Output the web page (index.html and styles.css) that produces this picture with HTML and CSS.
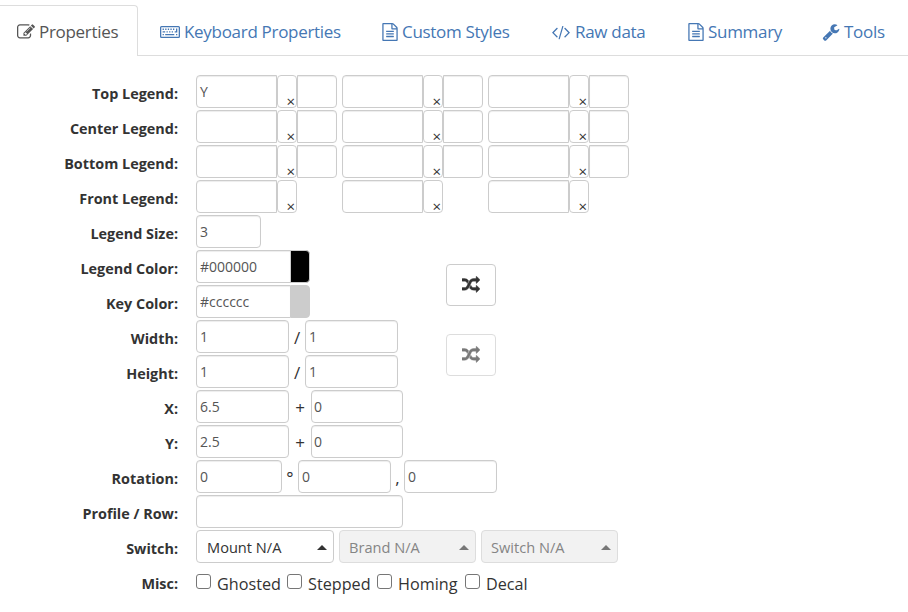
FILE: index.html
```html
<!DOCTYPE html>
<html lang="en">
<head>
<meta charset="utf-8">
<title>Key Properties</title>
<link rel="stylesheet" href="styles.css">
</head>
<body>
<svg class="defs" width="0" height="0">
  <symbol id="i-edit" viewBox="0 0 1792 1792"><path d="M888 1184l116-116-152-152-116 116v56h96v96h56zm440-720q-16-16-33 1l-350 350q-17 17-1 33t33-1l350-350q17-17 1-33zm80 594v190q0 119-84.5 203.500t-203.500 84.500h-832q-119 0-203.500-84.500t-84.500-203.500v-832q0-119 84.500-203.500t203.500-84.500h832q63 0 117 25 15 7 18 23 3 17-9 29l-49 49q-14 14-32 8-23-6-45-6h-832q-66 0-113 47t-47 113v832q0 66 47 113t113 47h832q66 0 113-47t47-113v-126q0-13 9-22l64-64q15-15 35-7t20 29zm-96-738l288 288-672 672h-288v-288zm444 132l-92 92-288-288 92-92q28-28 68-28t68 28l152 152q28 28 28 68t-28 68z"/></symbol>
  <symbol id="i-keyboard" viewBox="0 0 20 12"><path fill-rule="evenodd" d="M1.500 0h17A1.500 1.500 0 0 1 20 1.500v9a1.500 1.500 0 0 1-1.500 1.500h-17A1.500 1.500 0 0 1 0 10.500v-9A1.500 1.500 0 0 1 1.500 0zM1.300 1.300v9.400h17.400V1.300z"/><path d="M2.600 2.600h1.300v1.300H2.600zM5.200 2.600h1.300v1.300H5.200zM7.800 2.600h1.300v1.300H7.800zM10.400 2.600h1.300v1.300h-1.300zM13 2.600h1.300v1.300H13zM16 2.600h1.300v3.900h-2.600V5.200H16zM2.600 5.200h2.600v1.300H2.600zM6.500 5.200h1.300v1.300H6.500zM9.100 5.200h1.300v1.300H9.100zM11.700 5.200H13v1.300h-1.300zM2.600 7.900h1.300v1.300H2.600zM5.200 7.900h9.100v1.300H5.200zM16 7.900h1.300v1.300H16z"/></symbol>
  <symbol id="i-file" viewBox="0 0 1792 1792"><path d="M1596 380q28 28 48 76t20 88v1152q0 40-28 68t-68 28h-1344q-40 0-68-28t-28-68v-1600q0-40 28-68t68-28h896q40 0 88 20t76 48zm-444-244v376h376q-10-29-22-41l-313-313q-12-12-41-22zm384 1528v-1024h-416q-40 0-68-28t-28-68v-416h-768v1536h1280zm-1024-864q0-14 9-23t23-9h704q14 0 23 9t9 23v64q0 14-9 23t-23 9h-704q-14 0-23-9t-9-23v-64zm736 224q14 0 23 9t9 23v64q0 14-9 23t-23 9h-704q-14 0-23-9t-9-23v-64q0-14 9-23t23-9h704zm0 256q14 0 23 9t9 23v64q0 14-9 23t-23 9h-704q-14 0-23-9t-9-23v-64q0-14 9-23t23-9h704z"/></symbol>
  <symbol id="i-code" viewBox="0 0 2048 1792"><path d="M681 1399l-50 50q-10 10-23 10t-23-10l-466-466q-10-10-10-23t10-23l466-466q10-10 23-10t23 10l50 50q10 10 10 23t-10 23l-393 393 393 393q10 10 10 23t-10 23zm591-1067l-373 1291q-4 13-15.500 19.500t-23.500 2.500l-62-17q-13-4-19.500-15.500t-2.500-24.500l373-1291q4-13 15.500-19.500t23.500-2.500l62 17q13 4 19.500 15.500t2.500 24.500zm657 651l-466 466q-10 10-23 10t-23-10l-50-50q-10-10-10-23t10-23l393-393-393-393q-10-10-10-23t10-23l50-50q10-10 23-10t23 10l466 466q10 10 10 23t-10 23z"/></symbol>
  <symbol id="i-wrench" viewBox="0 0 1792 1792"><path d="M448 1472q0-26-19-45t-45-19-45 19-19 45 19 45 45 19 45-19 19-45zm644-420l-682 682q-37 37-90 37-52 0-91-37l-106-108q-38-36-38-90 0-53 38-91l681-681q39 98 114.500 173.500t173.500 114.500zm634-435q0 39-23 106-47 134-164.500 217.500t-258.500 83.500q-185 0-316.500-131.500t-131.500-316.500 131.500-316.500 316.500-131.500q58 0 121.500 16.500t107.500 46.500q16 11 16 28t-16 28l-293 169v224l193 107q5-3 79-48.500t135.500-81 70.500-35.500q15 0 23.500 10t8.500 25z"/></symbol>
  <symbol id="i-random" viewBox="0 0 1792 1792"><path d="M666 481q-60 92-137 273-22-45-37-72.500t-40.500-63.500-51-56.500-63-35-81.500-14.500h-224q-14 0-23-9t-9-23v-192q0-14 9-23t23-9h224q250 0 410 225zm1126 799q0 14-9 23l-320 320q-9 9-23 9-13 0-22.500-9.500t-9.500-22.500v-192q-32 0-85 .5t-81 1-73-1-71-5-64-10.500-63-18.500-58-28.500-59-40-55-53.500-56-69.500q59-93 136-273 22 45 37 72.500t40.500 63.500 51 56.500 63 35 81.500 14.500h256v-192q0-14 9-23t23-9q12 0 24 10l319 319q9 9 9 23zm0-896q0 14-9 23l-320 320q-9 9-23 9-13 0-22.500-9.500t-9.500-22.500v-192h-256q-48 0-87 15t-69 45-51 61.500-45 77.500q-32 62-78 171-29 66-49.500 111t-54 105-64 100-74 83-90 68.500-106.500 42-128 16.500h-224q-14 0-23-9t-9-23v-192q0-14 9-23t23-9h224q48 0 87-15t69-45 51-61.500 45-77.500q32-62 78-171 29-66 49.500-111t54-105 64-100 74-83 90-68.500 106.500-42 128-16.500h256v-192q0-14 9-23t23-9q12 0 24 10l319 319q9 9 9 23z"/></symbol>
</svg>

<nav class="tabs">
  <a class="tab tab-properties active"><svg class="icon"><use href="#i-edit"/></svg><span>Properties</span></a>
  <a class="tab tab-keyboard"><svg class="icon icon-keyboard"><use href="#i-keyboard"/></svg><span>Keyboard Properties</span></a>
  <a class="tab tab-styles"><svg class="icon"><use href="#i-file"/></svg><span>Custom Styles</span></a>
  <a class="tab tab-raw"><svg class="icon icon-code"><use href="#i-code"/></svg><span>Raw data</span></a>
  <a class="tab tab-summary"><svg class="icon"><use href="#i-file"/></svg><span>Summary</span></a>
  <a class="tab tab-tools"><svg class="icon"><use href="#i-wrench"/></svg><span>Tools</span></a>
</nav>

<form class="form">
  <div class="row"><label>Top Legend:</label>
    <div class="legends">
      <div class="legend"><div class="input text">Y</div><div class="swatch">×</div><div class="input size"></div></div>
      <div class="legend"><div class="input text"></div><div class="swatch">×</div><div class="input size"></div></div>
      <div class="legend"><div class="input text"></div><div class="swatch">×</div><div class="input size"></div></div>
    </div></div>
  <div class="row"><label>Center Legend:</label>
    <div class="legends">
      <div class="legend"><div class="input text"></div><div class="swatch">×</div><div class="input size"></div></div>
      <div class="legend"><div class="input text"></div><div class="swatch">×</div><div class="input size"></div></div>
      <div class="legend"><div class="input text"></div><div class="swatch">×</div><div class="input size"></div></div>
    </div></div>
  <div class="row"><label>Bottom Legend:</label>
    <div class="legends">
      <div class="legend"><div class="input text"></div><div class="swatch">×</div><div class="input size"></div></div>
      <div class="legend"><div class="input text"></div><div class="swatch">×</div><div class="input size"></div></div>
      <div class="legend"><div class="input text"></div><div class="swatch">×</div><div class="input size"></div></div>
    </div></div>
  <div class="row"><label>Front Legend:</label>
    <div class="legends">
      <div class="legend"><div class="input text"></div><div class="swatch">×</div></div>
      <div class="legend"><div class="input text"></div><div class="swatch">×</div></div>
      <div class="legend"><div class="input text"></div><div class="swatch">×</div></div>
    </div></div>
  <div class="row"><label>Legend Size:</label><div class="input w65">3</div></div>
  <div class="pair">
    <div class="rows">
      <div class="row"><label>Legend Color:</label><div class="input color">#000000</div><div class="chip black"></div></div>
      <div class="row"><label>Key Color:</label><div class="input color">#cccccc</div><div class="chip gray"></div></div>
    </div>
    <div class="swap"><svg><use href="#i-random"/></svg></div>
  </div>
  <div class="pair">
    <div class="rows">
      <div class="row"><label>Width:</label><div class="input w93">1</div><span class="op slash">/</span><div class="input w93">1</div></div>
      <div class="row"><label>Height:</label><div class="input w93">1</div><span class="op slash">/</span><div class="input w93">1</div></div>
    </div>
    <div class="swap disabled"><svg><use href="#i-random"/></svg></div>
  </div>
  <div class="row"><label>X:</label><div class="input w93">6.5</div><span class="op plus">+</span><div class="input w92">0</div></div>
  <div class="row"><label>Y:</label><div class="input w93">2.5</div><span class="op plus">+</span><div class="input w92">0</div></div>
  <div class="row"><label>Rotation:</label><div class="input w86">0</div><span class="op degree">°</span><div class="input w93">0</div><span class="op comma">,</span><div class="input w93">0</div></div>
  <div class="row"><label>Profile / Row:</label><div class="input w207"></div></div>
  <div class="row"><label>Switch:</label>
    <div class="selects">
      <div class="select mount"><span>Mount N/A</span><i></i></div>
      <div class="select disabled"><span>Brand N/A</span><i></i></div>
      <div class="select disabled"><span>Switch N/A</span><i></i></div>
    </div></div>
  <div class="row misc"><label>Misc:</label>
    <div class="check c1"><i></i><span>Ghosted</span></div>
    <div class="check c2"><i></i><span>Stepped</span></div>
    <div class="check c3"><i></i><span>Homing</span></div>
    <div class="check c4"><i></i><span>Decal</span></div>
  </div>
</form>
</body>
</html>
```
FILE: styles.css
```css
* { box-sizing: border-box; }
body {
  margin: 0;
  background: #fff;
  color: #333;
  font: 15px/20px "Open Sans", "Noto Sans", sans-serif;
  overflow: hidden;
}
.defs { display: block; height: 0; }
svg { fill: currentColor; flex: none; }

/* Tabs */
.tabs {
  display: flex;
  height: 56px;
  padding-top: 5px;
  border-bottom: 1px solid #ddd;
}
.tab {
  display: flex;
  align-items: center;
  height: 50px;
  padding-top: 3px;
  color: #4577b4;
  font-size: 17px;
  white-space: nowrap;
  letter-spacing: -0.3px;
}
.icon { width: 18px; height: 18px; margin-right: 4px; }
.tab.active {
  height: 51px;
  padding: 2px 0 0 17px;
  color: #555;
  background: #fff;
  border: 1px solid #ddd;
  border-width: 1px 1px 0 0;
  border-radius: 0 4px 0 0;
}
.tab-properties { width: 138px; margin-right: 22px; }
.tab-keyboard { width: 221px; }
.tab-styles { width: 170px; }
.tab-raw { width: 136px; }
.tab-summary { width: 135px; }
.icon-keyboard { width: 20px; height: 12px; margin-right: 4px; }
.tab-styles .icon, .tab-summary .icon { margin-right: 3px; }
.icon-code { width: 20px; }

/* Form */
.form { padding-top: 19px; }
.row { display: flex; height: 33px; margin-bottom: 2px; }
label {
  width: 178px;
  margin-right: 18px;
  padding-top: 9px;
  text-align: right;
  font-weight: 700;
  font-size: 14.4px;
  white-space: nowrap;
}
.input {
  height: 33px;
  padding: 6px 3px;
  border: 1px solid #ccc;
  border-radius: 4px;
  box-shadow: inset 0 1px 1px rgba(0, 0, 0, 0.075);
  color: #555;
  font-size: 14px;
}
.legends { display: flex; gap: 5px; }
.legend { display: flex; width: 141px; }
.text { width: 81px; border-radius: 4px 0 0 4px; }
.size { width: 40px; border-radius: 0 4px 4px 0; }
.swatch {
  width: 20px;
  height: 33px;
  padding: 16px 1px 0 0;
  border: 1px solid #ccc;
  border-radius: 4px;
  text-align: right;
  font-size: 15px;
  line-height: 18px;
}
.w65 { width: 65px; }
.w86 { width: 86px; }
.w92 { width: 92px; }
.w93 { width: 93px; }
.w207 { width: 207px; }
.color { width: 94px; border-right: 0; border-radius: 4px 0 0 4px; }
.chip { width: 20px; border: 1px solid #ccc; border-radius: 0 4px 4px 0; }
.black { background: #000; }
.gray { background: #ccc; }
.op { padding-top: 8px; text-align: center; font-size: 17px; }
.slash { width: 16px; }
.plus { width: 22px; }
.w92 { padding-left: 2px; }
.degree { width: 16px; }
.comma { width: 13px; }

.pair { display: flex; }
.rows { width: 446px; }
.swap {
  display: flex;
  align-items: center;
  justify-content: center;
  width: 50px;
  height: 42px;
  margin-top: 14px;
  border: 1px solid #ccc;
  border-radius: 4px;
}
.swap svg { width: 18px; height: 18px; stroke: currentColor; stroke-width: 40; }
.swap.disabled { opacity: 0.65; }

.selects { display: flex; gap: 5px; }
.select {
  display: flex;
  justify-content: space-between;
  width: 137px;
  height: 33px;
  padding: 6px 6px 0 9px;
  border: 1px solid #ccc;
  border-radius: 4px;
  font-size: 14.6px;
  white-space: nowrap;
}
.mount { width: 138px; padding-left: 10px; }
.select i {
  margin-top: 8px;
  height: 0;
  border: 5px solid transparent;
  border-top: 0;
  border-bottom-color: #333;
}
.select.disabled { background: #f2f2f2; border-color: #ddd; color: #858585; }
.select.disabled i { border-bottom-color: #777; }

.check { display: flex; font-size: 16.2px; white-space: nowrap; }
.check i {
  width: 15px;
  height: 15px;
  margin: 9px 6px 0 0;
  border: 1px solid #767676;
  border-radius: 3px;
}
.check span { padding-top: 9px; }
.c1 { width: 91px; }
.c2 { width: 90px; }
.c3 { width: 88px; }
```
